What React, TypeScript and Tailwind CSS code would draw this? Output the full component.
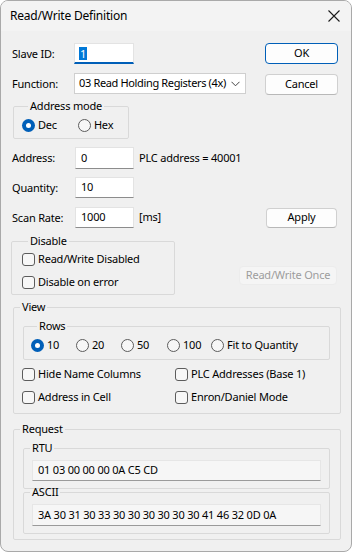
import React from 'react';

const font = { fontFamily: '"Noto Sans", "Open Sans", sans-serif' };

function GroupBox({ label, className, children }: any) {
  return (
    <fieldset className={'border border-[#d9d9d9] rounded-[2px] ' + (className || '')}>
      <legend className="ml-[6px] px-[2px] text-[11px] leading-[14px] text-black">{label}</legend>
      {children}
    </fieldset>
  );
}

function Radio({ checked, label, className }: any) {
  return (
    <div className={'flex items-center h-[14px] ' + (className || '')}>
      {checked ? (
        <span className="w-[13px] h-[13px] rounded-full bg-[#005fb8] flex items-center justify-center">
          <span className="w-[5px] h-[5px] rounded-full bg-white" />
        </span>
      ) : (
        <span className="w-[13px] h-[13px] rounded-full border border-[#5c5c5c] bg-[#f7f7f7]" />
      )}
      <span className="ml-[3px] text-[11px] leading-[14px]">{label}</span>
    </div>
  );
}

function Check({ label, className }: any) {
  return (
    <div className={'flex items-center h-[14px] ' + (className || '')}>
      <span className="w-[13px] h-[13px] rounded-[3px] border border-[#5c5c5c] bg-[#f7f7f7]" />
      <span className="ml-[3px] text-[11px] leading-[14px]">{label}</span>
    </div>
  );
}

function Button({ children, className, primary, disabled }: any) {
  return (
    <div
      className={
        'flex items-center justify-center rounded-[4px] border text-[11px] ' +
        (primary
          ? 'border-[#005fb8] bg-[#fdfdfd] text-black '
          : disabled
          ? 'border-[#ececec] bg-[#f5f5f5] text-[#9d9d9d] '
          : 'border-[#d0d0d0] border-b-[#b8b8b8] bg-[#fdfdfd] text-black ') +
        (className || '')
      }
    >
      {children}
    </div>
  );
}

function Field({ value, className }: any) {
  return (
    <div
      className={
        'flex items-center bg-white border border-[#e3e3e3] border-b-[#8c8c8c] pl-[5px] text-[11px] ' +
        (className || '')
      }
    >
      {value}
    </div>
  );
}

function Label({ children }: any) {
  return <span className="w-[62px] shrink-0 text-[11px] leading-[14px]">{children}</span>;
}

export default function App() {
  return (
    <div className="w-[352px] h-[554px] bg-white text-black whitespace-nowrap tracking-[-0.2px]" style={font}>
      <div className="h-[552px] rounded-[8px] border border-[#a9a9a9] bg-[#f0f0f0] overflow-hidden flex flex-col">
        <div className="h-[30px] shrink-0 flex items-center pl-[9px] pr-[10px] bg-[#f3f3f3]">
          <span className="text-[12px]">Read/Write Definition</span>
          <svg className="ml-auto" width="14" height="14" viewBox="0 0 14 14">
            <path d="M1.5 1.5L12.5 12.5M12.5 1.5L1.5 12.5" stroke="#1b1b1b" strokeWidth="1.1" fill="none" />
          </svg>
        </div>

        <div className="flex flex-col pl-[11px] pr-[12px]">
          <div className="mt-[12px] flex items-center h-[21px]">
            <Label>Slave ID:</Label>
            <div className="w-[60px] h-[21px] bg-white border border-[#e3e3e3] border-b-2 border-b-[#005fb8] flex items-center pl-[4px]">
              <span className="bg-[#0078d7] text-white text-[11px] leading-[13px] px-[1px]">1</span>
            </div>
            <Button primary className="ml-auto mr-[1px] w-[73px] h-[21px]">OK</Button>
          </div>

          <div className="mt-[9px] flex items-center h-[21px]">
            <Label>Function:</Label>
            <div className="w-[172px] h-[21px] bg-white border border-[#cfcfcf] flex items-center pl-[4px] pr-[5px] text-[11px]">
              <span className="tracking-[-0.35px]">03 Read Holding Registers (4x)</span>
              <svg className="ml-auto shrink-0" width="9" height="6" viewBox="0 0 9 6">
                <path d="M0.5 0.8L4.5 4.8L8.5 0.8" stroke="#444" strokeWidth="1" fill="none" />
              </svg>
            </div>
            <Button className="ml-auto mr-[1px] w-[73px] h-[21px] mt-[1px]">Cancel</Button>
          </div>

          <GroupBox label="Address mode" className="mt-[5px] ml-[1px] w-[116px] pt-[5px] pb-[6px] pl-[8px]">
            <div className="flex">
              <Radio checked label="Dec" />
              <Radio label="Hex" className="ml-[21px]" />
            </div>
          </GroupBox>

          <div className="mt-[8px] flex items-center h-[22px]">
            <Label>Address:</Label>
            <Field value="0" className="w-[59px] h-[22px] ml-[1px]" />
            <span className="ml-[5px] text-[11px]">PLC address = 40001</span>
          </div>
          <div className="mt-[8px] flex items-center h-[21px]">
            <Label>Quantity:</Label>
            <Field value="10" className="w-[59px] h-[21px] ml-[1px]" />
          </div>
          <div className="mt-[9px] flex items-center h-[21px]">
            <Label>Scan Rate:</Label>
            <Field value="1000" className="w-[59px] h-[21px] ml-[1px]" />
            <span className="ml-[5px] text-[11px]">[ms]</span>
            <Button className="ml-auto mr-[2px] w-[71px] h-[20px]">Apply</Button>
          </div>

          <div className="mt-[6px] flex items-start">
            <GroupBox label="Disable" className="-ml-[1px] w-[164px] pt-[4px] pb-[5px] pl-[10px]">
              <Check label="Read/Write Disabled" />
              <Check label="Disable on error" className="mt-[9px]" />
            </GroupBox>
            <Button disabled className="ml-auto mr-[2px] mt-[32px] w-[98px] h-[19px]">Read/Write Once</Button>
          </div>

          <GroupBox label="View" className="mt-[5px] ml-[1px] w-[328px] pt-[5px] pb-[9px]">
            <GroupBox label="Rows" className="ml-[9px] w-[307px] pt-[5px] pb-[7px] pl-[7px]">
              <div className="flex">
                <Radio checked label="10" className="w-[45px]" />
                <Radio label="20" className="w-[45px]" />
                <Radio label="50" className="w-[46px]" />
                <Radio label="100" className="w-[44px]" />
                <Radio label="Fit to Quantity" />
              </div>
            </GroupBox>
            <div className="mt-[7px] pl-[8px] flex">
              <Check label="Hide Name Columns" className="w-[153px]" />
              <Check label="PLC Addresses (Base 1)" />
            </div>
            <div className="mt-[9px] pl-[8px] flex">
              <Check label="Address in Cell" className="w-[153px]" />
              <Check label="Enron/Daniel Mode" />
            </div>
          </GroupBox>

          <GroupBox label="Request" className="mt-[8px] ml-[1px] w-[328px] pt-[5px] pb-[5px]">
            <GroupBox label="RTU" className="ml-[9px] w-[307px] pt-[5px] pb-[7px]">
              <div className="ml-[8px] w-[289px] h-[21px] bg-[#f6f6f6] border border-[#e6e6e6] border-b-[#9a9a9a] flex items-center pl-[5px] text-[11px]">
                01 03 00 00 00 0A C5 CD
              </div>
            </GroupBox>
            <GroupBox label="ASCII" className="-mt-[4px] ml-[9px] w-[307px] pt-[5px] pb-[7px]">
              <div className="ml-[8px] w-[289px] h-[22px] bg-[#f6f6f6] border border-[#e6e6e6] border-b-[#9a9a9a] flex items-center pl-[5px] text-[11px]">
                3A 30 31 30 33 30 30 30 30 30 30 41 46 32 0D 0A
              </div>
            </GroupBox>
          </GroupBox>
        </div>
      </div>
    </div>
  );
}
